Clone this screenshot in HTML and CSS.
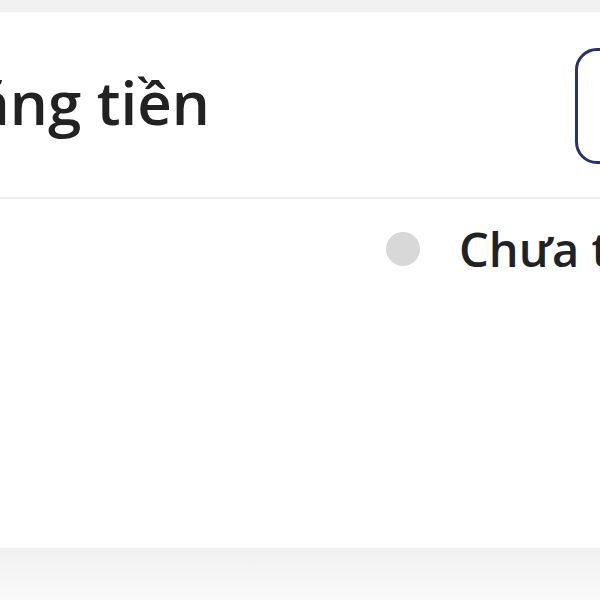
FILE: index.html
```html
<!DOCTYPE html>
<html>
<head>
    <meta charset="utf-8" />
    <title>Thắng tiền</title>
    <link rel="stylesheet" href="styles.css">
</head>
<body>
    <div class="page">
        <div class="band"></div>
        <div class="card">
            <div class="card-head">
                <h1 class="title">Thắng tiền</h1>
                <button class="btn-outline" aria-label="Xem"></button>
            </div>
            <div class="status-row">
                <span class="dot"></span>
                <span class="status">Chưa thanh toán</span>
            </div>
        </div>
        <div class="foot"></div>
    </div>
</body>
</html>
```

FILE: styles.css
```css
body {
    margin: 0;
    background: #f7f7f7;
    font-family: "Open Sans", "Noto Sans", sans-serif;
    color: #222;
}

.page {
    width: 600px;
    height: 600px;
    overflow: hidden;
    display: flex;
    flex-direction: column;
}

.band {
    height: 12px;
    background: #f1f1f1;
    flex: none;
}

.card {
    height: 536px;
    background: #fff;
    flex: none;
    display: flex;
    flex-direction: column;
}

    .card-head {
        height: 185px;
        border-bottom: 2px solid #ececec;
        display: flex;
        align-items: center;
        justify-content: space-between;
        flex: none;
    }

    .title {
        margin: 0 0 6px -97px;
        font-size: 60px;
        font-weight: 600;
        line-height: 1.2;
        white-space: nowrap;
    }

    .btn-outline {
        width: 100px;
        height: 116px;
        margin-right: -75px;
        margin-top: 2px;
        border: 3px solid #2b3169;
        border-radius: 22px;
        background: #fff;
        flex: none;
    }

.status-row {
    display: flex;
    align-items: center;
    gap: 39px;
    padding: 22px 0 0 386px;
    white-space: nowrap;
}

    .dot {
        width: 34px;
        height: 34px;
        border-radius: 50%;
        background: #d8d8d8;
        flex: none;
    }

    .status {
        font-size: 47px;
        font-weight: 600;
        line-height: 1.2;
    }

.foot {
    flex: 1;
    background: linear-gradient(#f0f0f0, #fafafa);
}
```
